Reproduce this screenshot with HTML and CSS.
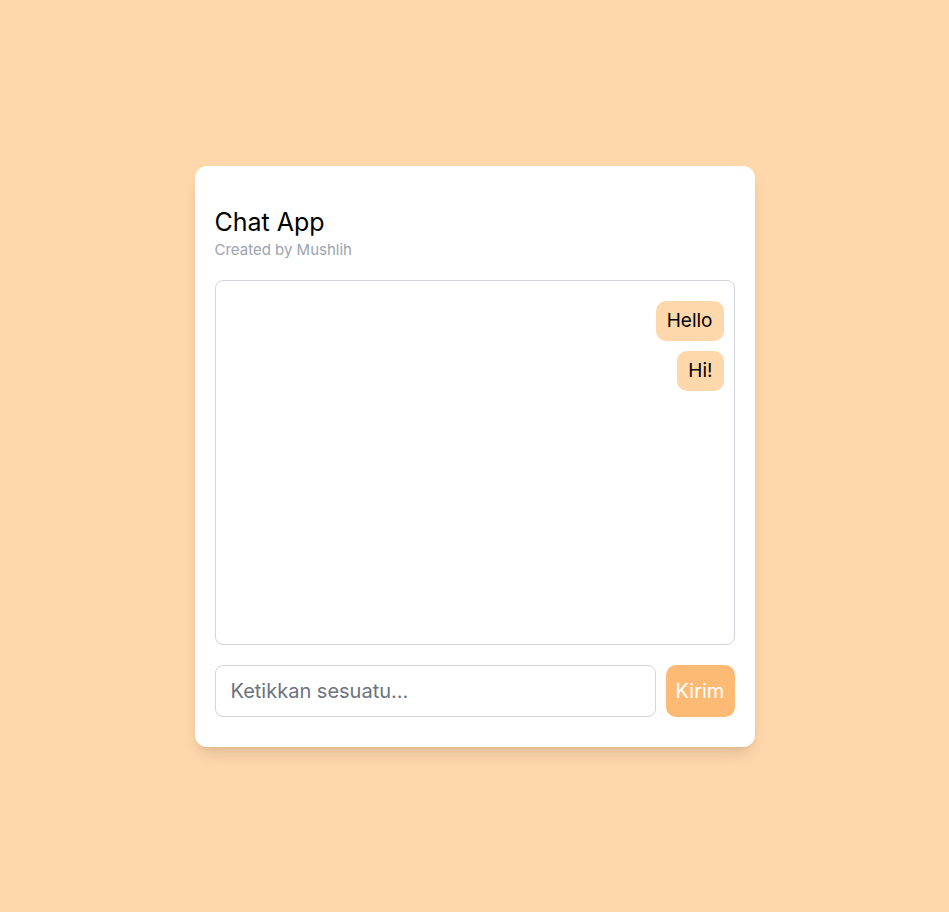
FILE: index.html
```html
<!DOCTYPE html>
<html lang="id">
<head>
<meta charset="utf-8">
<title>Chat App</title>
<link rel="stylesheet" href="styles.css">
</head>
<body>
<main class="page">
  <section class="card">
    <header class="header">
      <h1 class="title">Chat App</h1>
      <p class="subtitle">Created by Mushlih</p>
    </header>
    <div class="messages">
      <div class="bubble">Hello</div>
      <div class="bubble">Hi!</div>
    </div>
    <form class="composer">
      <input class="input" type="text" placeholder="Ketikkan sesuatu...">
      <button class="send" type="button">Kirim</button>
    </form>
  </section>
</main>
</body>
</html>
```
FILE: styles.css
```css
* { box-sizing: border-box; }
html, body { margin: 0; height: 100%; }
body {
  background: #fed7aa;
  font-family: Inter, "Noto Sans", sans-serif;
}
.page {
  min-height: 100%;
  display: flex;
  align-items: center;
  justify-content: center;
}
.card {
  width: 560px;
  background: #fff;
  border-radius: 12px;
  padding: 40px 20px 30px;
  box-shadow: 0 10px 15px -3px rgba(0,0,0,0.1), 0 4px 6px -4px rgba(0,0,0,0.1);
}
.title {
  margin: 0;
  font-size: 25px;
  line-height: 32px;
  font-weight: 400;
  color: #000;
}
.subtitle {
  margin: 1px 0 0;
  font-size: 15px;
  line-height: 21px;
  color: #9ca3af;
}
.messages {
  margin-top: 20px;
  height: 365px;
  border: 1px solid #d1d5db;
  border-radius: 8px;
  padding: 20px 10px 10px;
  display: flex;
  flex-direction: column;
  align-items: flex-end;
  gap: 10px;
}
.bubble {
  background: #fed7aa;
  border-radius: 10px;
  padding: 6px 11px;
  font-size: 19px;
  line-height: 28px;
  color: #000;
}
.composer {
  margin-top: 20px;
  display: flex;
  gap: 10px;
}
.input {
  flex: 1;
  height: 52px;
  border: 1px solid #d1d5db;
  border-radius: 8px;
  padding: 0 15px;
  font-family: inherit;
  font-size: 20px;
  color: #111;
  outline: none;
}
.input::placeholder { color: #6b7280; }
.send {
  width: 69px;
  height: 52px;
  border: none;
  border-radius: 10px;
  background: #fdba74;
  color: #fff;
  font-family: inherit;
  font-size: 20px;
  padding: 0;
}
```
